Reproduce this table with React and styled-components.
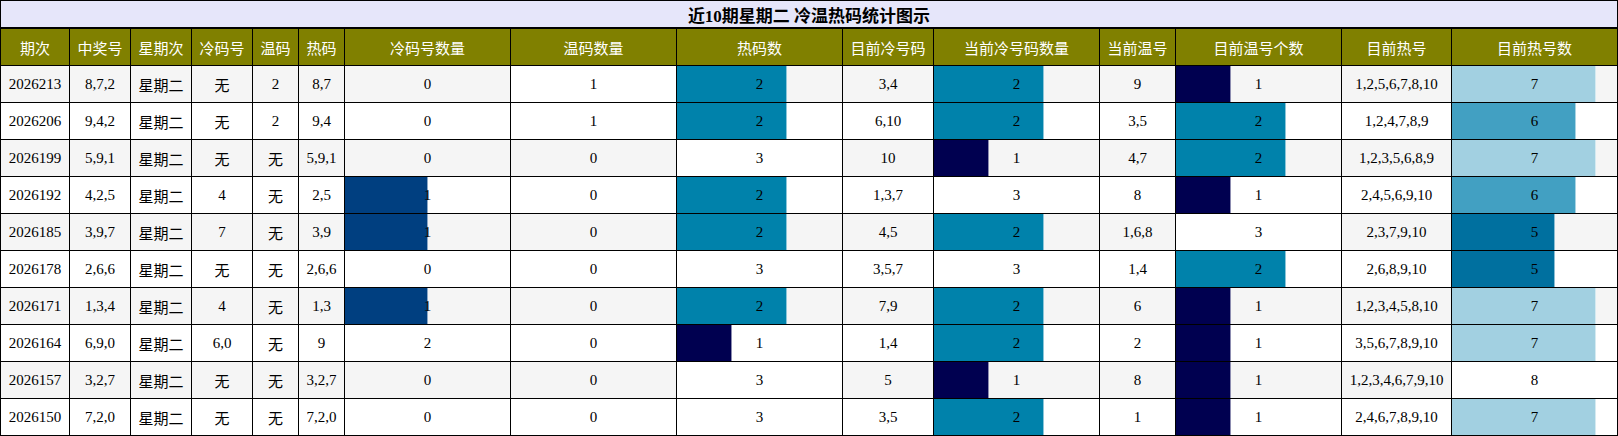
import React from 'react';
import styled, { createGlobalStyle } from 'styled-components';

const GlobalStyle = createGlobalStyle`
  html, body { margin: 0; padding: 0; background: #fff; }
  body { font-family: "Liberation Serif", "Noto Sans CJK SC", serif; }
`;

const COLS = [69, 61, 61, 61, 46, 46, 166, 166, 166, 91, 166, 76, 166, 110, 166];

const HEADERS = ['期次', '中奖号', '星期次', '冷码号', '温码', '热码', '冷码号数量', '温码数量', '热码数', '目前冷号码', '当前冷号码数量', '当前温号', '目前温号个数', '目前热号', '目前热号数'];

// bar columns: index -> max value
const BAR_MAX = { 6: 2, 7: 1, 8: 3, 10: 3, 12: 3, 14: 8 };

const ROWS = [
  ['2026213', '8,7,2', '星期二', '无', '2', '8,7', 0, 1, 2, '3,4', 2, '9', 1, '1,2,5,6,7,8,10', 7],
  ['2026206', '9,4,2', '星期二', '无', '2', '9,4', 0, 1, 2, '6,10', 2, '3,5', 2, '1,2,4,7,8,9', 6],
  ['2026199', '5,9,1', '星期二', '无', '无', '5,9,1', 0, 0, 3, '10', 1, '4,7', 2, '1,2,3,5,6,8,9', 7],
  ['2026192', '4,2,5', '星期二', '4', '无', '2,5', 1, 0, 2, '1,3,7', 3, '8', 1, '2,4,5,6,9,10', 6],
  ['2026185', '3,9,7', '星期二', '7', '无', '3,9', 1, 0, 2, '4,5', 2, '1,6,8', 3, '2,3,7,9,10', 5],
  ['2026178', '2,6,6', '星期二', '无', '无', '2,6,6', 0, 0, 3, '3,5,7', 3, '1,4', 2, '2,6,8,9,10', 5],
  ['2026171', '1,3,4', '星期二', '4', '无', '1,3', 1, 0, 2, '7,9', 2, '6', 1, '1,2,3,4,5,8,10', 7],
  ['2026164', '6,9,0', '星期二', '6,0', '无', '9', 2, 0, 1, '1,4', 2, '2', 1, '3,5,6,7,8,9,10', 7],
  ['2026157', '3,2,7', '星期二', '无', '无', '3,2,7', 0, 0, 3, '5', 1, '8', 1, '1,2,3,4,6,7,9,10', 8],
  ['2026150', '7,2,0', '星期二', '无', '无', '7,2,0', 0, 0, 3, '3,5', 2, '1', 1, '2,4,6,7,8,9,10', 7],
];

function barColor(ratio) {
  if (ratio >= 0.999) return '#ffffff';
  if (ratio >= 0.85) return '#a2d0e1';
  if (ratio >= 0.7) return '#42a0c2';
  if (ratio >= 0.64) return '#0082ab';
  if (ratio >= 0.6) return '#00709f';
  if (ratio >= 0.45) return '#003f80';
  return '#000050';
}

const Table = styled.div`
  display: grid;
  grid-template-columns: ${COLS.map((w) => `${w}px`).join(' ')};
  grid-template-rows: 28px 37px repeat(${ROWS.length}, 37px);
  width: max-content;
  border-left: 1px solid #000;
  border-top: 1px solid #000;
`;

const Title = styled.div`
  grid-column: 1 / -1;
  box-sizing: border-box;
  background: #e6e6fa;
  border-right: 1px solid #000;
  border-bottom: 2px solid #000;
  display: flex;
  align-items: center;
  justify-content: center;
  font-size: 17px;
  font-weight: bold;
  color: #000;
  padding-top: 1px;
`;

const HeadCell = styled.div`
  box-sizing: border-box;
  background: #808000;
  color: #fff;
  border-right: 1px solid #000;
  border-bottom: 1px solid #000;
  display: flex;
  align-items: center;
  justify-content: center;
  font-size: 15px;
  white-space: nowrap;
`;

const Cell = styled.div`
  box-sizing: border-box;
  background: ${(p) => (p.$alt ? '#f5f5f5' : '#ffffff')};
  border-right: 1px solid #000;
  border-bottom: 1px solid #000;
  display: flex;
  align-items: center;
  justify-content: center;
  font-size: 15px;
  color: #000;
  white-space: nowrap;
`;

const BarCell = styled.div`
  box-sizing: border-box;
  background: ${(p) => (p.$alt ? '#f5f5f5' : '#ffffff')};
  border-right: 1px solid #000;
  border-bottom: 1px solid #000;
  display: grid;
  grid-template-columns: 100%;
  grid-template-rows: 100%;
  font-size: 15px;
  color: #000;
`;

const Bar = styled.div`
  grid-area: 1 / 1;
  justify-self: start;
  align-self: stretch;
  box-sizing: border-box;
  background: ${(p) => p.$color};
  border-right: ${(p) => (p.$full ? '0' : '1px solid rgba(255,255,255,0.55)')};
`;

const Value = styled.span`
  grid-area: 1 / 1;
  align-self: center;
  justify-self: center;
  position: relative;
`;

export default function App() {
  return (
    <>
      <GlobalStyle />
      <Table>
        <Title>近10期星期二 冷温热码统计图示</Title>
        {HEADERS.map((h) => (
          <HeadCell key={h}>{h}</HeadCell>
        ))}
        {ROWS.map((row, ri) =>
          row.map((v, ci) => {
            const alt = ri % 2 === 0;
            const key = `${ri}-${ci}`;
            if (BAR_MAX[ci] !== undefined) {
              const ratio = v / BAR_MAX[ci];
              return (
                <BarCell key={key} $alt={alt}>
                  {v > 0 && (
                    <Bar
                      $color={barColor(ratio)}
                      $full={ratio >= 0.999}
                      style={{ width: `${ratio * 100}%` }}
                    />
                  )}
                  <Value>{v}</Value>
                </BarCell>
              );
            }
            return (
              <Cell key={key} $alt={alt}>
                {v}
              </Cell>
            );
          })
        )}
      </Table>
    </>
  );
}
